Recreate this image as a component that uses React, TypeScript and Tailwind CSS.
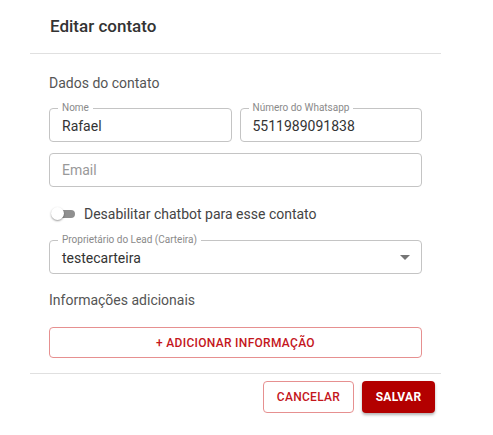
import { ReactNode } from 'react';

function Outlined({ label, children, className = '' }: { label?: string; children: ReactNode; className?: string }) {
  return (
    <div className={`relative h-[34px] rounded border border-[#c4c4c4] ${className}`}>
      {label && (
        <span className="absolute -top-[8px] left-[8px] bg-white px-[4px] text-[10px] leading-[14px] text-[#8a8a8a]">
          {label}
        </span>
      )}
      <div className="flex h-full items-center px-[12px]">{children}</div>
    </div>
  );
}

export default function App() {
  return (
    <div className="h-[435px] w-[493px] bg-white font-['Roboto','Liberation_Sans',sans-serif]">
      <div className="ml-[30px] w-[411px]">
        <h2 className="px-[20px] pt-[13px] pb-[14px] text-[17px] font-medium leading-[26px] text-[#333]">
          Editar contato
        </h2>
        <div className="h-px bg-[#e0e0e0]" />

        <div className="px-[19px] pt-[19px]">
          <p className="text-[14px] leading-[20px] text-[#555]">Dados do contato</p>

          <div className="mt-[15px] flex gap-[8px]">
            <Outlined label="Nome" className="flex-1">
              <span className="pt-[2px] text-[14px] text-[#333]">Rafael</span>
            </Outlined>
            <Outlined label="Número do Whatsapp" className="flex-1">
              <span className="pt-[2px] text-[14px] text-[#333]">5511989091838</span>
            </Outlined>
          </div>

          <Outlined className="mt-[11px]">
            <span className="text-[14px] text-[#999]">Email</span>
          </Outlined>

          <div className="mt-[17px] flex items-center gap-[6px]">
            <div className="relative h-[14px] w-[29px]">
              <div className="absolute top-[3px] left-[6px] h-[8px] w-[20px] rounded-full bg-[#8f8f8f]" />
              <div className="absolute top-0 left-[2px] h-[13px] w-[13px] rounded-full bg-white shadow-[0_1px_2px_rgba(0,0,0,0.4)]" />
            </div>
            <span className="text-[14px] leading-[20px] text-[#444]">Desabilitar chatbot para esse contato</span>
          </div>

          <Outlined label="Proprietário do Lead (Carteira)" className="mt-[16px]">
            <span className="flex-1 pt-[2px] text-[14px] text-[#333]">testecarteira</span>
            <svg width="10" height="5" viewBox="0 0 10 5" className="mr-[-1px]">
              <path d="M0 0 L5 5 L10 0 Z" fill="#757575" />
            </svg>
          </Outlined>

          <p className="mt-[16px] text-[14px] leading-[20px] text-[#555]">Informações adicionais</p>

          <button className="mt-[17px] flex h-[31px] w-full items-center justify-center rounded border border-[#e69090] text-[12px] font-medium tracking-[0.3px] text-[#c4161c]">
            + ADICIONAR INFORMAÇÃO
          </button>
        </div>

        <div className="mt-[15px] h-px bg-[#e0e0e0]" />

        <div className="flex justify-end gap-[8px] pt-[7px] pr-[6px]">
          <button className="h-[32px] w-[91px] rounded border border-[#e69090] text-[12px] font-medium tracking-[0.3px] text-[#c4161c]">
            CANCELAR
          </button>
          <button className="h-[32px] w-[73px] rounded bg-[#b30000] text-[12px] font-bold tracking-[0.3px] text-white shadow-[0_2px_3px_rgba(0,0,0,0.3)]">
            SALVAR
          </button>
        </div>
      </div>
    </div>
  );
}
